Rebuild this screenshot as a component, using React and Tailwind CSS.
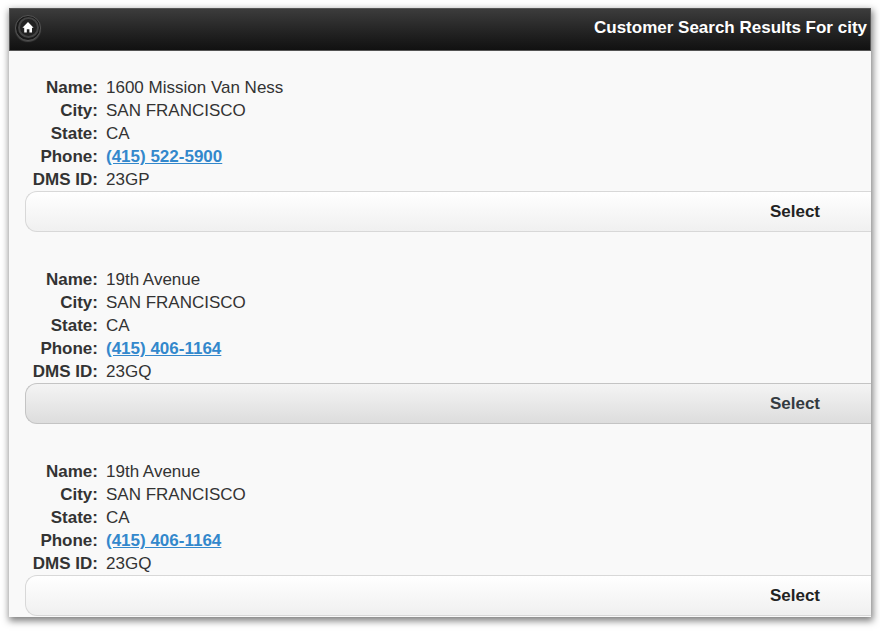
const customers = [
  { name: '1600 Mission Van Ness', city: 'SAN FRANCISCO', state: 'CA', phone: '(415) 522-5900', dmsId: '23GP' },
  { name: '19th Avenue', city: 'SAN FRANCISCO', state: 'CA', phone: '(415) 406-1164', dmsId: '23GQ', active: true },
  { name: '19th Avenue', city: 'SAN FRANCISCO', state: 'CA', phone: '(415) 406-1164', dmsId: '23GQ' },
];

function HomeButton() {
  return (
    <button
      type="button"
      aria-label="Home"
      className="flex size-[26px] shrink-0 items-center justify-center rounded-full border border-[#555] bg-[#191919] shadow-[0_1px_1px_#444]"
    >
      <span className="flex size-[21px] items-center justify-center rounded-full border-2 border-[#444] bg-[#222]">
        <svg viewBox="0 0 12 11" className="h-[11px] w-3 shrink-0" fill="#fff" aria-hidden="true">
          <path d="M6 0 L11.6 5.7 H10 V10.5 H7.4 V7.2 H4.8 V10.5 H2.2 V5.7 H0.4 Z" />
        </svg>
      </span>
    </button>
  );
}

function Field({ label, children }) {
  return (
    <div className="flex gap-2">
      <dt className="w-[73px] shrink-0 whitespace-nowrap text-right font-bold">{label}:</dt>
      <dd>{children}</dd>
    </div>
  );
}

function Customer({ customer }) {
  return (
    <article>
      <dl>
        <Field label="Name">{customer.name}</Field>
        <Field label="City">{customer.city}</Field>
        <Field label="State">{customer.state}</Field>
        <Field label="Phone">
          <a href={`tel:${customer.phone}`} className="font-bold text-[#3388cc] underline">
            {customer.phone}
          </a>
        </Field>
        <Field label="DMS ID">{customer.dmsId}</Field>
      </dl>
      <button
        type="button"
        className={`block h-[41px] w-full rounded-l-xl border border-r-0 pr-[51px] text-right font-bold ${
          customer.active
            ? 'border-[#c4c4c4] bg-linear-to-b from-[#f4f4f4] to-[#dddddd] text-[#333a40]'
            : 'border-[#d8d8d8] bg-linear-to-b from-white to-[#f0f0f0] text-[#222]'
        }`}
      >
        Select
      </button>
    </article>
  );
}

export default function App() {
  return (
    <div className="bg-white pt-2 pr-[9px] pb-4 pl-[9px] font-['Liberation_Sans',Arial,sans-serif] text-[17px] leading-[23px] text-[#333]">
      <div className="overflow-hidden bg-[#f9f9f9] shadow-[1px_3px_7px_1px_rgba(0,0,0,0.5)]">
        <header className="flex h-[43px] items-center justify-between border border-[#555] bg-linear-to-b from-[#3c3c3c] to-[#111] pr-[3px] pb-1 pl-[5px]">
          <HomeButton />
          <h1 className="whitespace-nowrap font-bold text-white">Customer Search Results For city</h1>
        </header>
        <main className="flex flex-col gap-9 pt-[25px] pb-px pl-4">
          {customers.map((customer, index) => (
            <Customer key={index} customer={customer} />
          ))}
        </main>
      </div>
    </div>
  );
}
